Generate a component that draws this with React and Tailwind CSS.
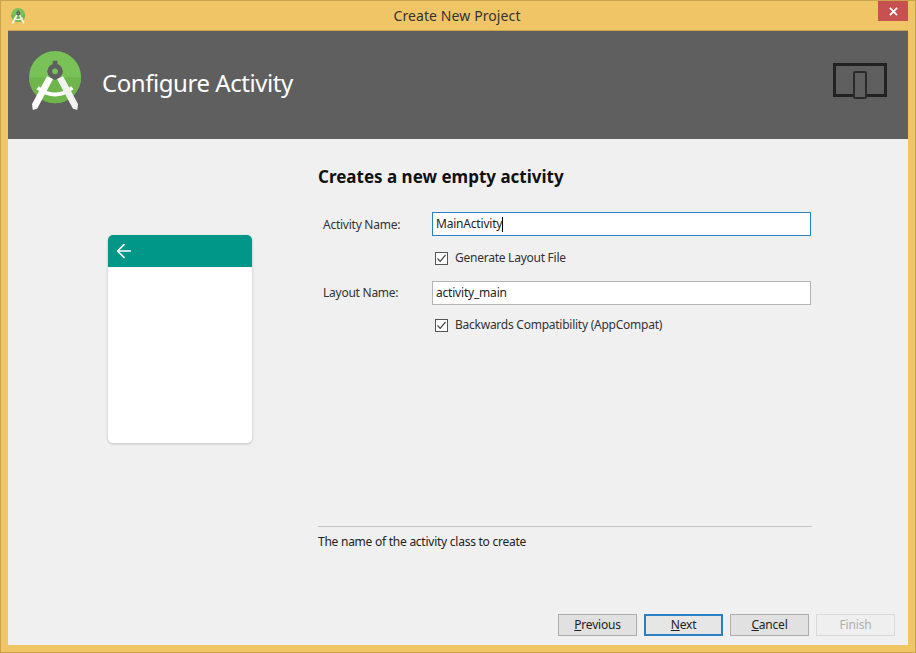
import { ArrowLeft } from 'lucide-react'

const font = { fontFamily: '"Noto Sans", "Open Sans", sans-serif' }

function StudioLogo({ className }) {
  return (
    <svg viewBox="0 0 56 62" className={className}>
      <circle cx="27" cy="27" r="27" fill="#78c257" />
      <path d="M0 27a27 27 0 0 0 54 0z" fill="#6eb54c" />
      <path d="M9 38Q27 52 45 38" fill="none" stroke="#fff" strokeWidth="4" />
      <path d="M19 27 L24 29 L8 59 L4.500 60 L4 55z" fill="#fff" stroke="#fff" strokeWidth="1.500" strokeLinejoin="round" />
      <path d="M35 27 L30 29 L46 59 L49.500 60 L50 55z" fill="#f2f2f2" stroke="#f2f2f2" strokeWidth="1.500" strokeLinejoin="round" />
      <path d="M27 13a8 8 0 0 1 8 8c0 3-1.500 5-3.500 6.500L27 30l-4.500-2.500C20.500 26 19 24 19 21a8 8 0 0 1 8-8z" fill="#5f5f5f" />
      <rect x="24.500" y="10" width="5" height="5" fill="#5f5f5f" />
      <circle cx="27" cy="21" r="3" fill="#78c257" />
    </svg>
  )
}

function Check({ label }) {
  return (
    <div className="flex items-center h-4 ml-[117px] gap-[7px]">
      <div className="w-[13px] h-[13px] bg-white border border-[#555] flex items-center justify-center">
        <svg viewBox="0 0 11 11" className="w-[11px] h-[11px]">
          <path d="M1.500 5.500 L4.200 8.300 L9.500 2" fill="none" stroke="#444" strokeWidth="1.200" />
        </svg>
      </div>
      <span className="text-[12px] leading-4 text-[#333] tracking-[-0.25px]">{label}</span>
    </div>
  )
}

function Field({ label, value, focused }) {
  return (
    <div className="flex items-center h-6">
      <div className={`w-[114px] pl-[5px] text-[12px] text-[#333] tracking-[-0.25px] ${focused ? 'pt-[2px]' : ''}`}>{label}</div>
      <div
        className={`w-[379px] h-6 bg-white border flex items-center pl-[3px] text-[12px] text-[#222] tracking-[-0.2px] ${
          focused ? 'border-[#2a7fc0]' : 'border-[#b5b5b5]'
        }`}
      >
        {value}
        {focused && <span className="w-px h-[15px] bg-black" />}
      </div>
    </div>
  )
}

function Btn({ children, primary, disabled }) {
  return (
    <div
      className={`w-[79px] h-[22px] flex items-center justify-center text-[12px] tracking-[-0.2px] ${
        primary
          ? 'border-2 border-[#2b80c4] bg-[#e6e6e6] text-[#222]'
          : disabled
          ? 'border border-[#d9d9d9] bg-[#efefef] text-[#b0b0b0]'
          : 'border border-[#adadad] bg-[#e1e1e1] text-[#222]'
      }`}
    >
      {children}
    </div>
  )
}

export default function App() {
  return (
    <div className="w-[916px] h-[653px] flex flex-col bg-[#efc566] border border-[#c9a34e] overflow-hidden" style={font}>
      {/* title bar */}
      <div className="h-[29px] flex items-center relative shrink-0">
        <StudioLogo className="w-[15px] h-[16px] ml-[10px]" />
        <div className="flex-1 text-center text-[14px] text-[#333] pr-[27px] tracking-[0.1px]">Create New Project</div>
        <div className="absolute right-[7px] top-0 w-[30px] h-[20px] bg-[#c75050] flex items-center justify-center">
          <svg viewBox="0 0 10 10" className="w-[9px] h-[9px]">
            <path d="M1 1 L9 9 M9 1 L1 9" stroke="#fff" strokeWidth="2" />
          </svg>
        </div>
      </div>

      <div className="mx-[7px] flex-1 flex flex-col border-t border-[#c9a34e] bg-[#f0f0f0] w-[900px]">
        {/* banner */}
        <div className="h-[108px] shrink-0 bg-[#5f5f5f] flex items-center pl-[21px] pr-[21px]">
          <StudioLogo className="w-[54px] h-[60px] mb-[8px]" />
          <div className="ml-[19px] flex-1 text-[24px] text-white tracking-[-0.45px] mb-[4px]">Configure Activity</div>
          <div className="relative w-[54px] h-[34px] mb-[10px] border-[3px] border-[#222]">
            <div className="absolute left-[17px] top-[5px] w-[14px] h-[28px] bg-[#5f5f5f] border-2 border-[#2a2a2a] rounded-[2px]" />
          </div>
        </div>

        {/* body */}
        <div className="flex-1 flex">
          <div className="w-[310px] shrink-0 pl-[100px] pt-[96px]">
            <div className="w-[144px] h-[208px] bg-white rounded-[5px] shadow-[0_1px_3px_rgba(0,0,0,0.2)] overflow-hidden">
              <div className="h-8 bg-[#009688] flex items-center pl-[5px]">
                <ArrowLeft className="w-[22px] h-[22px] text-white" strokeWidth={1.7} />
              </div>
            </div>
          </div>
          <div className="flex-1 flex flex-col pt-[26px] pr-[20px]">
            <h1 className="text-[17px] leading-[24px] font-bold text-[#111]">Creates a new empty activity</h1>
            <div className="mt-[23px]"><Field label="Activity Name:" value="MainActivity" focused /></div>
            <div className="mt-[14px]"><Check label="Generate Layout File" /></div>
            <div className="mt-[15px]"><Field label="Layout Name:" value="activity_main" /></div>
            <div className="mt-[12px]"><Check label="Backwards Compatibility (AppCompat)" /></div>
            <div className="mt-[193px] border-t border-[#c4c4c4] pt-[7px] text-[12px] text-[#222] leading-4 w-[494px] tracking-[-0.25px]">
              The name of the activity class to create
            </div>
            <div className="flex-1" />
            <div className="flex justify-end gap-[7px] pb-[9px] mr-[-7px]">
              <Btn><span className="underline">P</span>revious</Btn>
              <Btn primary><span className="underline">N</span>ext</Btn>
              <Btn><span className="underline">C</span>ancel</Btn>
              <Btn disabled>Finish</Btn>
            </div>
          </div>
        </div>
      </div>
      <div className="h-[7px] shrink-0" />
    </div>
  )
}
